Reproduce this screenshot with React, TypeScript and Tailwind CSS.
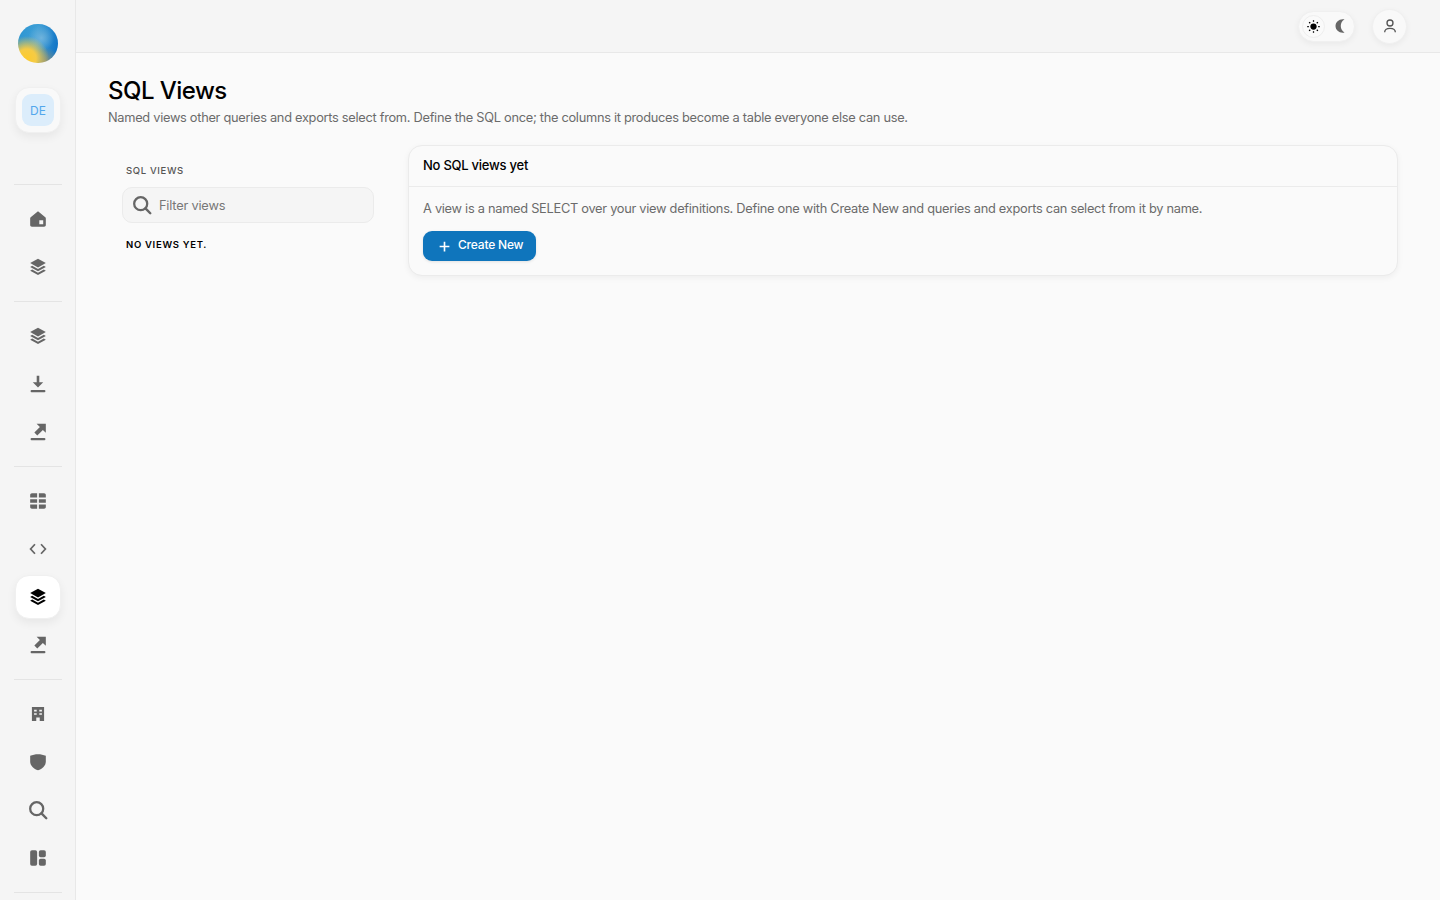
const font = { fontFamily: "Inter, sans-serif" };

function Icon({ children, size = 20, className = "" }: { children: React.ReactNode; size?: number; className?: string }) {
  return (
    <svg width={size} height={size} viewBox="0.5 0.5 23 23" fill="currentColor" className={className}>
      {children}
    </svg>
  );
}

const HomeIcon = () => (
  <Icon>
    <path fillRule="evenodd" d="M12 3 3.6 10c-.4.3-.6.8-.6 1.300V19c0 1.100.9 2 2 2h14c1.100 0 2-.9 2-2v-7.700c0-.5-.2-1-.6-1.300L12 3ZM13.500 13.500h4.500V18h-4.500v-4.500Z" />
  </Icon>
);
const LayersIcon = () => (
  <Icon>
    <path d="M12 2.500 3 7.500l9 5 9-5-9-5Z" />
    <path d="M5.300 10.700 3 12l9 5 9-5-2.300-1.300-6.700 3.700-6.700-3.700Z" />
    <path d="M5.300 15 3 16.300l9 5 9-5-2.300-1.300-6.700 3.700L5.300 15Z" />
  </Icon>
);
const DownloadIcon = () => (
  <Icon>
    <path d="M10.500 2.500h3v7.500H18l-6 6-6-6h4.500V2.500Z" />
    <rect x="3.500" y="19" width="17" height="2.400" rx="1" />
  </Icon>
);
const ExportIcon = () => (
  <Icon>
    <path d="M10.500 2.500H21V13l-3.400-3.400-6.400 6.400-3.400-3.400 6.400-6.400-3.800-3.800Z" />
    <rect x="3.500" y="19" width="17" height="2.400" rx="1" />
  </Icon>
);
const TableIcon = () => (
  <Icon>
    <path d="M3 5C3 3.900 3.900 3 5 3h6v5H3V5ZM13 3h6c1.100 0 2 .9 2 2v3h-8V3ZM3 10h8v4H3v-4ZM13 10h8v4h-8v-4ZM3 16h8v5H5c-1.100 0-2-.9-2-2v-3ZM13 16h8v3c0 1.100-.9 2-2 2h-6v-5Z" />
  </Icon>
);
const CodeIcon = () => (
  <Icon>
    <path d="M8.500 6.500 3.500 12l5 5.500M15.500 6.500l5 5.500-5 5.500" fill="none" stroke="currentColor" strokeWidth="2" />
  </Icon>
);
const BuildingIcon = () => (
  <Icon>
    <path fillRule="evenodd" d="M5 4h14v16h-5v-4h-4v4H5V4Zm2.500 3v2h3V7h-3Zm6 0v2h3V7h-3Zm-6 4v2h3v-2h-3Zm6 0v2h3v-2h-3Z" />
  </Icon>
);
const ShieldIcon = () => (
  <Icon>
    <path d="M12 3c3.200 0 6.200.6 9 1.800v6.700c0 4.500-3.700 8.300-9 10-5.300-1.700-9-5.500-9-10V4.800C5.800 3.600 8.800 3 12 3Z" />
  </Icon>
);
const SearchIcon = () => (
  <Icon>
    <circle cx="10.500" cy="10.500" r="7.500" fill="none" stroke="currentColor" strokeWidth="2.600" />
    <path d="m16 16 5.500 5.500" fill="none" stroke="currentColor" strokeWidth="2.800" strokeLinecap="round" />
  </Icon>
);
const DashboardIcon = () => (
  <Icon>
    <rect x="3" y="3" width="8" height="18" rx="2" />
    <rect x="13" y="3" width="8" height="8" rx="2" />
    <rect x="13" y="13" width="8" height="8" rx="2" />
  </Icon>
);

function NavItem({ children, active = false }: { children: React.ReactNode; active?: boolean }) {
  return (
    <div className="w-[76px] h-12 shrink-0 flex items-center justify-center">
      <div
        className={
          active
            ? "w-[46px] h-11 flex items-center justify-center rounded-[14px] bg-white text-black border border-[#f0f0f0] shadow-[0_4px_10px_rgba(0,0,0,0.06)]"
            : "w-[46px] h-11 flex items-center justify-center text-[#666666]"
        }
      >
        {children}
      </div>
    </div>
  );
}

function Divider() {
  return <div className="w-12 h-px ml-[14px] my-[10px] bg-[#e4e4e4] shrink-0" />;
}

function Sidebar() {
  return (
    <aside className="w-[76px] shrink-0 h-full flex flex-col bg-[#f5f5f5] border-r border-[#e8e8e8] overflow-hidden">
      <div className="w-[76px] flex justify-center pt-6 shrink-0">
        <div className="w-10 h-[39px] rounded-full bg-[radial-gradient(circle_at_22%_88%,#fdcb2e_0%,#f5cb45_20%,rgba(243,203,76,0)_48%),radial-gradient(circle_at_68%_98%,#8a8f78_0%,rgba(138,143,120,0)_32%),radial-gradient(circle_at_58%_36%,#6fb3dc_0%,rgba(111,179,220,0)_38%),linear-gradient(100deg,#2b95d2_0%,#3f9fd6_45%,#0a6ec4_100%)]" />
      </div>
      <div className="w-[76px] flex justify-center mt-6 mb-[41px] shrink-0">
        <div className="w-[46px] h-[46px] rounded-[14px] bg-[#f9f9f9] border border-[#f0f0f0] shadow-[0_4px_10px_rgba(0,0,0,0.06)] flex items-center justify-center">
          <div className="w-8 h-8 pt-px rounded-[9px] bg-[#dcedfb] text-[#52a7ec] text-xs flex items-center justify-center">DE</div>
        </div>
      </div>
      <Divider />
      <NavItem><HomeIcon /></NavItem>
      <NavItem><LayersIcon /></NavItem>
      <Divider />
      <NavItem><LayersIcon /></NavItem>
      <NavItem><DownloadIcon /></NavItem>
      <NavItem><ExportIcon /></NavItem>
      <Divider />
      <NavItem><TableIcon /></NavItem>
      <NavItem><CodeIcon /></NavItem>
      <NavItem active><LayersIcon /></NavItem>
      <NavItem><ExportIcon /></NavItem>
      <Divider />
      <NavItem><BuildingIcon /></NavItem>
      <NavItem><ShieldIcon /></NavItem>
      <NavItem><SearchIcon /></NavItem>
      <NavItem><DashboardIcon /></NavItem>
      <Divider />
    </aside>
  );
}

function TopBar() {
  return (
    <header className="h-[53px] shrink-0 flex items-center justify-end gap-[17px] pr-[33px] bg-[#f5f5f5] border-b border-[#e8e8e8]">
      <div className="w-[57px] h-[31px] rounded-full bg-[#f9f9f9] border border-[#f0f0f0] shadow-[0_2px_6px_rgba(0,0,0,0.05)] flex items-center pl-[3px]">
        <div className="w-[23px] h-[23px] rounded-full bg-[#fafafa] border border-[#eeeeee] flex items-center justify-center text-black">
          <svg width="15" height="15" viewBox="0 0 24 24" fill="currentColor">
            <circle cx="12" cy="12" r="5" />
            <path d="M12 2v2.500M12 19.500V22M2 12h2.500M19.500 12H22M5 5l1.800 1.800M17.200 17.200 19 19M5 19l1.800-1.800M17.200 6.800 19 5" stroke="currentColor" strokeWidth="2" />
          </svg>
        </div>
        <div className="ml-[6px] text-[#666666]">
          <svg width="18" height="18" viewBox="0 0 24 24" fill="currentColor">
            <path d="M15.500 3C10.500 3 6 7 6 12s4.500 9 9.500 9c1 0 2-.2 2.500-.4-3-1.500-5-4.800-5-8.600s2-7.100 5-8.600c-.5-.2-1.500-.4-2.500-.4Z" />
          </svg>
        </div>
      </div>
      <div className="w-[35px] h-[35px] rounded-full bg-[#f9f9f9] border border-[#f0f0f0] shadow-[0_2px_6px_rgba(0,0,0,0.05)] flex items-center justify-center text-[#555555]">
        <svg width="16" height="16" viewBox="0 0 24 24" fill="none" stroke="currentColor" strokeWidth="2">
          <circle cx="12" cy="7.500" r="4.500" />
          <path d="M4 21.500c0-4 3.500-6 8-6s8 2 8 6" />
        </svg>
      </div>
    </header>
  );
}

export default function App() {
  return (
    <div className="w-[1440px] h-[900px] flex overflow-hidden bg-[#fafafa]" style={font}>
      <Sidebar />
      <div className="flex-1 min-w-0 flex flex-col">
        <TopBar />
        <main className="flex-1 pl-8 pr-[42px] pt-[22px]">
          <h1 className="text-[24px] leading-[32px] font-medium text-black tracking-[-0.53px]">SQL Views</h1>
          <p className="mt-px text-[12.8px] leading-[20px] text-[#6b6b6b] tracking-[-0.285px]">
            Named views other queries and exports select from. Define the SQL once; the columns it produces become a table everyone else can use.
          </p>
          <div className="flex mt-[17px]">
            <div className="w-[300px] shrink-0 pl-[14px] pr-[34px]">
              <div className="pt-5 pl-1 text-[9.5px] leading-3 font-medium tracking-[0.65px] text-[#555555]">SQL VIEWS</div>
              <div className="mt-[10px] h-9 rounded-[10px] bg-[#f5f5f5] border border-[#ebebeb] flex items-center pl-[9px] text-[#666666]">
                <SearchIcon />
                <span className="ml-[7px] pt-0.5 text-[12.8px] text-[#777777] tracking-[-0.2px]">Filter views</span>
              </div>
              <div className="mt-4 pl-1 text-[9.5px] leading-3 font-semibold tracking-[0.7px] text-black">NO VIEWS YET.</div>
            </div>
            <section className="w-[990px] h-[131px] rounded-[14px] bg-[#fafafa] border border-[#ebebeb] shadow-[0_2px_6px_rgba(0,0,0,0.05)]">
              <div className="h-[41px] flex items-center px-[14px] border-b border-[#ebebeb] text-[13px] font-medium text-black tracking-[-0.25px]">No SQL views yet</div>
              <div className="px-[14px] pt-3">
                <p className="text-[12.8px] leading-[20px] text-[#6b6b6b] tracking-[-0.275px]">
                  A view is a named SELECT over your view definitions. Define one with Create New and queries and exports can select from it by name.
                </p>
                <button className="mt-3 w-[113px] h-[30px] rounded-[9px] bg-[#0f75bc] text-white text-xs font-medium flex items-center pl-[15px] gap-[8px] tracking-[-0.2px] shadow-[0_1px_3px_rgba(0,0,0,0.1)]">
                  <svg width="13" height="13" viewBox="0 0 24 24" fill="none" stroke="currentColor" strokeWidth="3">
                    <path d="M12 3v18M3 12h18" />
                  </svg>
                  <span className="mb-0.5 -ml-px">Create New</span>
                </button>
              </div>
            </section>
          </div>
        </main>
      </div>
    </div>
  );
}
